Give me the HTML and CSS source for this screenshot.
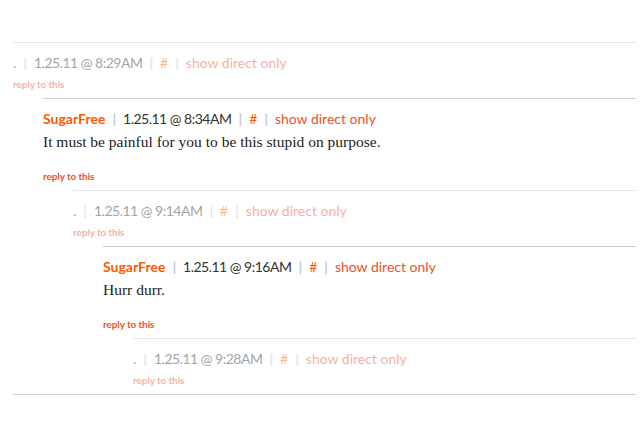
FILE: index.html
```html
<!DOCTYPE html>
<html>
<head>
<meta charset="utf-8">
<link rel="stylesheet" href="styles.css">
</head>
<body>
<div class="thread">
  <div class="comment faded">
    <div class="meta"><span class="name">.</span><span class="sep">|</span><span class="date">1.25.11 @ 8:29AM</span><span class="sep">|</span><a class="hash">#</a><span class="sep">|</span><a class="direct">show direct only</a></div>
    <a class="reply">reply to this</a>
  </div>
  <div class="children">
    <div class="comment">
      <div class="meta"><span class="name">SugarFree</span><span class="sep">|</span><span class="date">1.25.11 @ 8:34AM</span><span class="sep">|</span><a class="hash">#</a><span class="sep">|</span><a class="direct">show direct only</a></div>
      <p class="body">It must be painful for you to be this stupid on purpose.</p>
      <a class="reply">reply to this</a>
    </div>
    <div class="children">
      <div class="comment faded">
        <div class="meta"><span class="name">.</span><span class="sep">|</span><span class="date">1.25.11 @ 9:14AM</span><span class="sep">|</span><a class="hash">#</a><span class="sep">|</span><a class="direct">show direct only</a></div>
        <a class="reply">reply to this</a>
      </div>
      <div class="children">
        <div class="comment">
          <div class="meta"><span class="name">SugarFree</span><span class="sep">|</span><span class="date">1.25.11 @ 9:16AM</span><span class="sep">|</span><a class="hash">#</a><span class="sep">|</span><a class="direct">show direct only</a></div>
          <p class="body">Hurr durr.</p>
          <a class="reply">reply to this</a>
        </div>
        <div class="children">
          <div class="comment faded">
            <div class="meta"><span class="name">.</span><span class="sep">|</span><span class="date">1.25.11 @ 9:28AM</span><span class="sep">|</span><a class="hash">#</a><span class="sep">|</span><a class="direct">show direct only</a></div>
            <a class="reply">reply to this</a>
          </div>
        </div>
      </div>
    </div>
  </div>
</div>
</body>
</html>
```
FILE: styles.css
```css
html, body {
  margin: 0;
  padding: 0;
  background: #fff;
}
body {
  padding: 42px 4px 0 13px;
}
.thread {
  border-bottom: 1px solid #ccc;
}
.children {
  margin-left: 30px;
}
.comment {
  border-top: 1px solid #ccc;
  padding: 11px 0 8px 0;
  display: flex;
  flex-direction: column;
  align-items: flex-start;
}
.faded {
  opacity: 0.45;
}
.meta {
  font-family: Lato, sans-serif;
  font-size: 14px;
  line-height: 18px;
  color: #333;
  white-space: nowrap;
}
.name {
  color: #ff5a00;
  font-weight: bold;
}
.faded .name {
  color: #333;
  font-weight: normal;
}
.date {
  letter-spacing: -0.5px;
}
.sep {
  color: #b9cbdd;
  margin: 0 7px;
  font-weight: bold;
}
.hash {
  color: #ff5a00;
}
.direct {
  color: #f0502a;
}
.body {
  font-family: "Liberation Serif", serif;
  font-size: 15.5px;
  line-height: 20px;
  color: #222;
  margin: 4px 0 12px 0;
}
.reply {
  margin-top: 6px;
  font-family: Lato, sans-serif;
  font-size: 10px;
  font-weight: bold;
  line-height: 12px;
  color: #f0502a;
  letter-spacing: -0.1px;
}
```
